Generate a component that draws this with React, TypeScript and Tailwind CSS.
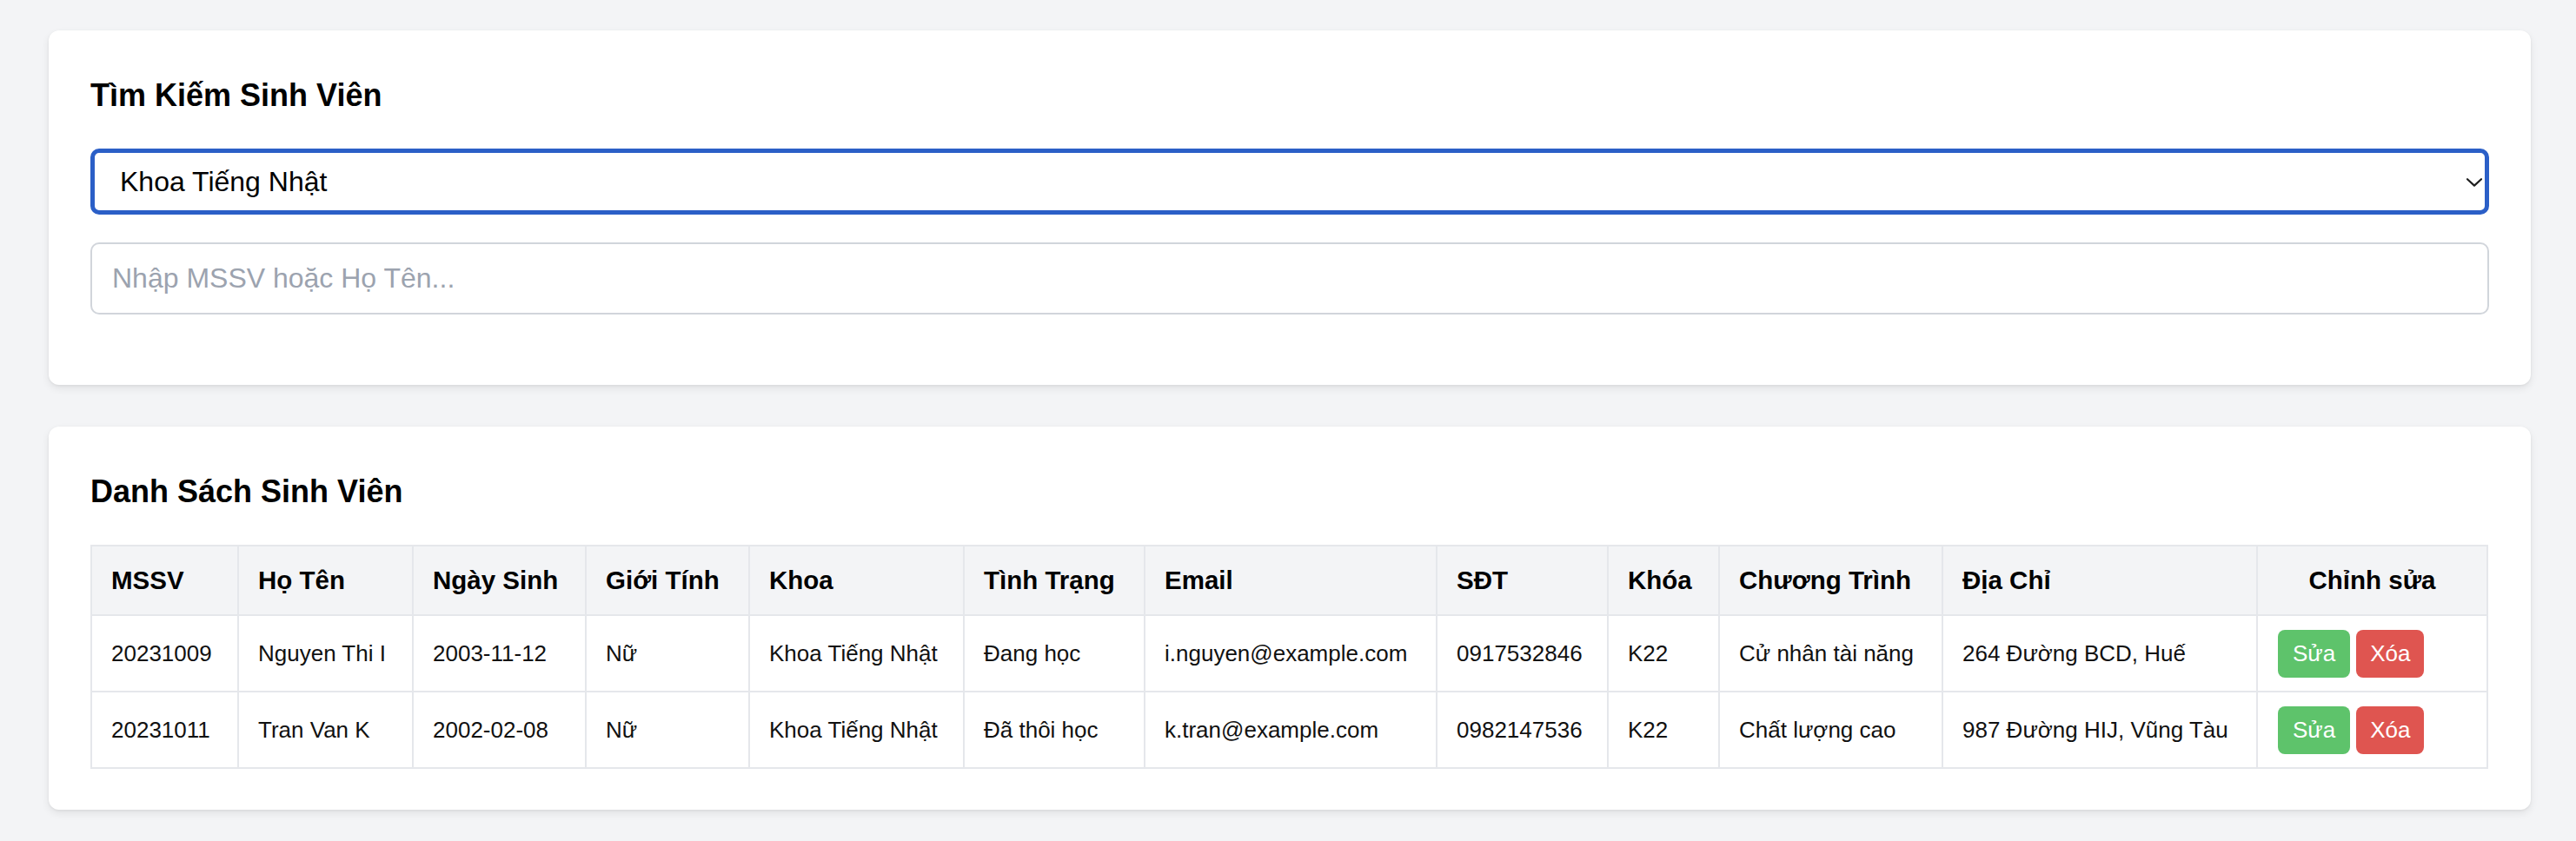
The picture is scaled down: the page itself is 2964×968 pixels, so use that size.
import React from "react";

const cols = [
  { label: "MSSV", w: "w-[169px]" },
  { label: "Họ Tên", w: "w-[201px]" },
  { label: "Ngày Sinh", w: "w-[199px]" },
  { label: "Giới Tính", w: "w-[188px]" },
  { label: "Khoa", w: "w-[247px]" },
  { label: "Tình Trạng", w: "w-[208px]" },
  { label: "Email", w: "w-[336px]" },
  { label: "SĐT", w: "w-[197px]" },
  { label: "Khóa", w: "w-[128px]" },
  { label: "Chương Trình", w: "w-[257px]" },
  { label: "Địa Chỉ", w: "w-[362px]" },
  { label: "Chỉnh sửa", w: "w-[265px]" },
];

const rows = [
  [
    "20231009",
    "Nguyen Thi I",
    "2003-11-12",
    "Nữ",
    "Khoa Tiếng Nhật",
    "Đang học",
    "i.nguyen@example.com",
    "0917532846",
    "K22",
    "Cử nhân tài năng",
    "264 Đường BCD, Huế",
  ],
  [
    "20231011",
    "Tran Van K",
    "2002-02-08",
    "Nữ",
    "Khoa Tiếng Nhật",
    "Đã thôi học",
    "k.tran@example.com",
    "0982147536",
    "K22",
    "Chất lượng cao",
    "987 Đường HIJ, Vũng Tàu",
  ],
];

export default function App() {
  return (
    <div
      className="min-h-screen bg-[#f3f4f6] pt-[35px] pb-[35px] pl-[56px] pr-[52px] flex flex-col gap-[48px]"
      style={{ fontFamily: '"Liberation Sans", Arial, sans-serif' }}
    >
      {/* Search card */}
      <section className="w-[2856px] bg-white rounded-[12px] shadow-[0_4px_10px_rgba(0,0,0,0.08),0_1px_3px_rgba(0,0,0,0.06)] px-[48px] pt-[48px] pb-[81px]">
        <h2 className="text-[36px] leading-[54px] font-bold text-black mb-[34px]">Tìm Kiếm Sinh Viên</h2>
        <div className="relative mb-[32px]">
          <select
            defaultValue="nhat"
            className="appearance-none w-full h-[76px] border-[5px] border-[#2b5fc7] rounded-[10px] bg-white pl-[29px] pr-[40px] text-[32px] text-black outline-none"
            style={{ fontFamily: '"Liberation Sans", Arial, sans-serif' }}
          >
            <option value="nhat">Khoa Tiếng Nhật</option>
          </select>
          <svg
            className="absolute right-[8px] top-[34px] pointer-events-none"
            width="18"
            height="10"
            viewBox="0 0 18 10"
            fill="none"
          >
            <path d="M1 1.2 L9 8.6 L17 1.2" stroke="#1f1f1f" strokeWidth="2.2" strokeLinecap="round" strokeLinejoin="round" />
          </svg>
        </div>
        <input
          type="text"
          placeholder="Nhập MSSV hoặc Họ Tên..."
          className="w-full h-[83px] border-[2px] border-[#d1d5db] rounded-[10px] bg-white px-[23px] text-[32px] text-black placeholder:text-[#9ca3af] outline-none"
          style={{ fontFamily: '"Liberation Sans", Arial, sans-serif' }}
        />
      </section>

      {/* List card */}
      <section className="w-[2856px] bg-white rounded-[12px] shadow-[0_4px_10px_rgba(0,0,0,0.08),0_1px_3px_rgba(0,0,0,0.06)] px-[48px] pt-[48px] pb-[47px]">
        <h2 className="text-[36px] leading-[54px] font-bold text-black mb-[34px]">Danh Sách Sinh Viên</h2>
        <div className="border-l-[2px] border-t-[2px] border-[#e5e7eb] w-[2759px]">
          <div className="flex bg-[#f3f4f6]">
            {cols.map((c, i) => (
              <div
                key={c.label}
                className={`${c.w} shrink-0 h-[80px] border-r-[2px] border-b-[2px] border-[#e5e7eb] flex items-center px-[22px] text-[29.5px] font-bold text-black whitespace-nowrap ${
                  i === cols.length - 1 ? "justify-center" : ""
                }`}
              >
                {c.label}
              </div>
            ))}
          </div>
          {rows.map((r) => (
            <div key={r[0]} className="flex bg-white">
              {r.map((v, i) => (
                <div
                  key={i}
                  className={`${cols[i].w} shrink-0 h-[88px] border-r-[2px] border-b-[2px] border-[#e5e7eb] flex items-center px-[22px] text-[26px] text-[#111111] whitespace-nowrap`}
                >
                  {v}
                </div>
              ))}
              <div className="w-[265px] shrink-0 h-[88px] border-r-[2px] border-b-[2px] border-[#e5e7eb] flex items-center gap-[7px] px-[23px]">
                <button className="h-[55px] px-[17px] rounded-[8px] bg-[#5ec36b] text-white text-[26px]">Sửa</button>
                <button className="h-[55px] px-[16px] rounded-[8px] bg-[#df5550] text-white text-[26px]">Xóa</button>
              </div>
            </div>
          ))}
        </div>
      </section>
    </div>
  );
}
